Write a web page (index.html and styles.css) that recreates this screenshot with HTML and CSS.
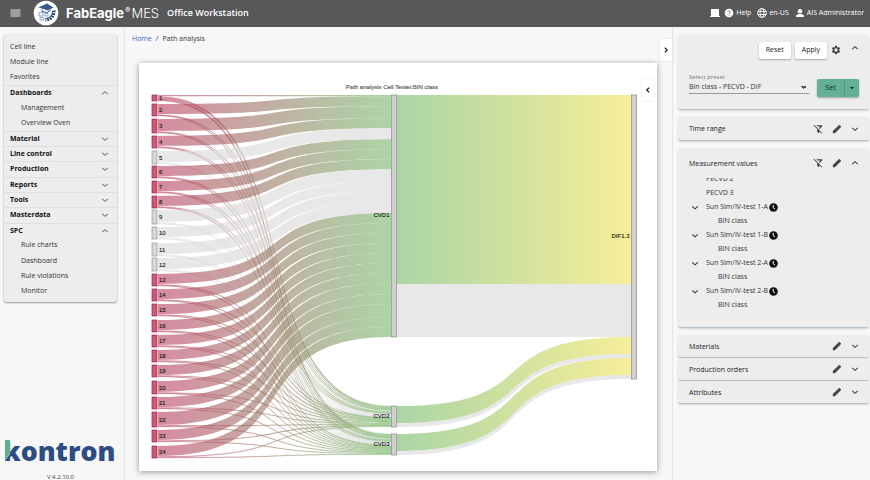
FILE: index.html
```html
<!DOCTYPE html>
<html lang="en">
<head>
    <meta charset="UTF-8">
    <meta name="viewport" content="width=device-width, initial-scale=1.0">
    <title>Path analysis - FabEagle MES</title>
    <link rel="stylesheet" href="styles.css">
</head>
<body>

    <!-- shared icons -->
    <svg class="sprite" aria-hidden="true">
        <symbol id="down" viewBox="0 0 10 10"><path d="M1.5 3.5 5 6.7 8.5 3.5" fill="none" stroke="currentColor" stroke-width="1.3"/></symbol>
        <symbol id="up" viewBox="0 0 10 10"><path d="M1.5 6.5 5 3.3 8.5 6.5" fill="none" stroke="currentColor" stroke-width="1.3"/></symbol>
        <symbol id="left" viewBox="0 0 10 10"><path d="M6.5 2 3.5 5 6.5 8" fill="none" stroke="currentColor" stroke-width="1.6"/></symbol>
        <symbol id="right" viewBox="0 0 10 10"><path d="M3.5 2 6.5 5 3.5 8" fill="none" stroke="currentColor" stroke-width="1.6"/></symbol>
        <symbol id="pencil" viewBox="0 0 24 24"><path fill="currentColor" d="M2 17V22h5L18.300 10.700l-5-5L2 17zM21.200 7.700c.7-.7.7-1.500 0-2.200l-2.700-2.700c-.7-.7-1.500-.7-2.200 0L13.300 5.700l5 5 2.900-3z"/></symbol>
        <symbol id="filter-off" viewBox="0 0 24 24"><path fill="currentColor" d="M8 3h14v3l-6 6.2-2-2L17.500 6H11L8 3zM2.700 2 1.300 3.400 10 12.200V19l5 3v-4.800l5.600 5.500 1.400-1.400L2.700 2z"/></symbol>
        <symbol id="clock" viewBox="0 0 10 10"><circle cx="5" cy="5" r="4.800" fill="#111"/><path d="M4.700 2.200V5.300L6.600 6.600" fill="none" stroke="#fff" stroke-width="1.100"/></symbol>
        <symbol id="gear" viewBox="0 0 24 24"><path fill="currentColor" fill-rule="evenodd" d="M19.400 13a7.500 7.500 0 0 0 0-2l2.100-1.600c.2-.2.3-.4.100-.6l-2-3.500c-.1-.2-.3-.3-.6-.2l-2.500 1a7.300 7.300 0 0 0-1.700-1l-.4-2.600c0-.3-.2-.5-.4-.5h-4c-.3 0-.5.200-.5.500l-.4 2.600c-.6.200-1.200.6-1.700 1l-2.500-1c-.2-.1-.5 0-.6.200l-2 3.500c-.1.200-.1.500.100.6L4.600 11a7.500 7.500 0 0 0 0 2l-2.100 1.600c-.2.200-.3.400-.1.600l2 3.500c.1.200.3.300.6.200l2.500-1c.5.400 1.100.7 1.700 1l.4 2.600c0 .3.200.5.500.5h4c.2 0 .4-.2.400-.5l.4-2.600c.6-.2 1.200-.6 1.700-1l2.500 1c.2.100.5 0 .6-.2l2-3.500c.1-.2.1-.5-.1-.6L19.400 13zM12 16a4 4 0 1 1 0-8 4 4 0 0 1 0 8z"/></symbol>
    </svg>

    <header class="topbar">
        <button class="burger" aria-label="Menu">
            <svg viewBox="0 0 10 8"><path d="M0 1h10M0 3h10M0 5h10M0 7h10" stroke="#e4e4e4" stroke-width="1.200"/></svg>
        </button>
        <svg class="emblem" viewBox="0 0 26 26">
            <circle cx="13" cy="13" r="12.300" fill="#fff"/>
            <path d="M5.500 7.500 14 3.500l6.500 4-5.500 3z" fill="#36588f"/>
            <path d="M9 9.500v2l5 1 4-2.500" fill="none" stroke="#36588f" stroke-width="1"/>
            <path d="M6 12.500h4v3.500H6zM12 13.500h3v2.500h-3zM7 17.500h4v2.500H7z" fill="none" stroke="#7591b8" stroke-width="0.800"/>
            <path d="M21 10.500a8.500 8.500 0 0 1-8.500 9.500" fill="none" stroke="#24406e" stroke-width="3" stroke-dasharray="1.700 1"/>
            <path d="M19.500 11a7 7 0 0 1-7 7.500" fill="none" stroke="#24406e" stroke-width="1"/>
        </svg>
        <div class="brand"><b>FabEagle</b><sup>®</sup><span>MES</span></div>
        <h1 class="app-title">Office Workstation</h1>
        <div class="tools">
            <svg class="laptop" viewBox="0 0 10 9"><path d="M1 .5h8v7H1zM0 7.500h10v1H0z" fill="#fff"/></svg>
            <a href="#help">
                <svg viewBox="0 0 10 10"><circle cx="5" cy="5" r="4.300" fill="#fff"/><path d="M3.700 4a1.300 1.300 0 1 1 2 1.100q-.7.400-.7.900M5 6.800v.9" fill="none" stroke="#58585a" stroke-width=".8"/></svg>
                Help
            </a>
            <a href="#lang">
                <svg viewBox="0 0 10 10" fill="none" stroke="#fff" stroke-width=".9"><circle cx="5" cy="5" r="4.400"/><ellipse cx="5" cy="5" rx="2" ry="4.400"/><path d="M1 3.500h8M1 6.500h8"/></svg>
                en-US
            </a>
            <a href="#user">
                <svg viewBox="0 0 10 10" fill="#fff"><circle cx="5" cy="3.200" r="2.200"/><path d="M1 9V7.800C1 6.500 3.500 5.900 5 5.900s4 .6 4 1.900V9z"/></svg>
                AIS Administrator
            </a>
        </div>
    </header>

    <div class="layout">
        <aside class="sidebar">
            <nav class="menu">
                <a href="#">Cell line</a>
                <a href="#">Module line</a>
                <a href="#">Favorites</a>
                <button>Dashboards<svg><use href="#up"/></svg></button>
                <a class="sub" href="#">Management</a>
                <a class="sub" href="#">Overview Oven</a>
                <button>Material<svg><use href="#down"/></svg></button>
                <button>Line control<svg><use href="#down"/></svg></button>
                <button>Production<svg><use href="#down"/></svg></button>
                <button>Reports<svg><use href="#down"/></svg></button>
                <button>Tools<svg><use href="#down"/></svg></button>
                <button>Masterdata<svg><use href="#down"/></svg></button>
                <button>SPC<svg><use href="#up"/></svg></button>
                <a class="sub" href="#">Rule charts</a>
                <a class="sub" href="#">Dashboard</a>
                <a class="sub" href="#">Rule violations</a>
                <a class="sub" href="#">Monitor</a>
            </nav>
            <div class="vendor">
                <svg viewBox="0 0 114 28" role="img" aria-label="kontron">
                    <text x="-1" y="24" class="vendor-name">kontron</text>
                    <path d="M0 3h6v14L1 24H0z" fill="#f7f7f7"/>
                    <path d="M1 3h5v13L1 24z" fill="#5fb08f"/>
                </svg>
                <span>V 4.2.10.0</span>
            </div>
        </aside>

        <main class="content">
            <div class="content-head">
                <nav class="crumbs"><a href="#">Home</a><span>/</span><span>Path analysis</span></nav>
                <button class="tab" aria-label="Collapse filters"><svg><use href="#right"/></svg></button>
            </div>
            <section class="chart-card">
                <svg id="sankey" viewBox="0 0 518 408"></svg>
                <button class="tab chart-tab" aria-label="Chart options"><svg><use href="#left"/></svg></button>
            </section>
        </main>

        <aside class="filters">
            <section class="panel preset">
                <div class="row actions">
                    <button class="btn">Reset</button>
                    <button class="btn">Apply</button>
                    <button class="icon-btn" aria-label="Settings"><svg><use href="#gear"/></svg></button>
                    <button class="icon-btn chev" aria-label="Collapse"><svg><use href="#up"/></svg></button>
                </div>
                <div class="row choose">
                    <div class="field">
                        <label for="preset">Select preset</label>
                        <select id="preset"><option>Bin class - PECVD - DIF</option></select>
                    </div>
                    <div class="split">
                        <button>Set</button>
                        <button class="caret" aria-label="More"><svg viewBox="0 0 6 4"><path d="M0 0h6L3 3.500z" fill="#123"/></svg></button>
                    </div>
                </div>
            </section>

            <section class="panel row">
                <h2>Time range</h2>
                <button class="icon-btn" aria-label="Clear filter"><svg><use href="#filter-off"/></svg></button>
                <button class="icon-btn" aria-label="Edit"><svg><use href="#pencil"/></svg></button>
                <button class="icon-btn chev" aria-label="Expand"><svg><use href="#down"/></svg></button>
            </section>

            <section class="panel values">
                <div class="row">
                    <h2>Measurement values</h2>
                    <button class="icon-btn" aria-label="Clear filter"><svg><use href="#filter-off"/></svg></button>
                    <button class="icon-btn" aria-label="Edit"><svg><use href="#pencil"/></svg></button>
                    <button class="icon-btn chev" aria-label="Collapse"><svg><use href="#up"/></svg></button>
                </div>
                <div class="scroller">
                    <ul class="tree">
                        <li>PECVD 2</li>
                        <li>PECVD 3</li>
                        <li><svg class="fold"><use href="#down"/></svg>Sun Sim/IV-test 1-A<svg><use href="#clock"/></svg></li>
                        <li class="leaf">BIN class</li>
                        <li><svg class="fold"><use href="#down"/></svg>Sun Sim/IV-test 1-B<svg><use href="#clock"/></svg></li>
                        <li class="leaf">BIN class</li>
                        <li><svg class="fold"><use href="#down"/></svg>Sun Sim/IV-test 2-A<svg><use href="#clock"/></svg></li>
                        <li class="leaf">BIN class</li>
                        <li><svg class="fold"><use href="#down"/></svg>Sun Sim/IV-test 2-B<svg><use href="#clock"/></svg></li>
                        <li class="leaf">BIN class</li>
                    </ul>
                </div>
            </section>

            <div class="stack">
                <section class="panel row">
                    <h2>Materials</h2>
                    <button class="icon-btn" aria-label="Edit"><svg><use href="#pencil"/></svg></button>
                    <button class="icon-btn chev" aria-label="Expand"><svg><use href="#down"/></svg></button>
                </section>
                <section class="panel row">
                    <h2>Production orders</h2>
                    <button class="icon-btn" aria-label="Edit"><svg><use href="#pencil"/></svg></button>
                    <button class="icon-btn chev" aria-label="Expand"><svg><use href="#down"/></svg></button>
                </section>
                <section class="panel row">
                    <h2>Attributes</h2>
                    <button class="icon-btn" aria-label="Edit"><svg><use href="#pencil"/></svg></button>
                    <button class="icon-btn chev" aria-label="Expand"><svg><use href="#down"/></svg></button>
                </section>
            </div>
        </aside>
    </div>

    <script src="sankey.js"></script>
</body>
</html>
```

FILE: styles.css
```css
* {
    box-sizing: border-box;
}

body {
    display: flex;
    flex-direction: column;
    height: 100vh;
    margin: 0;
    overflow: hidden;
    background-color: #f7f7f7;
    color: #333;
    font-family: "Open Sans", "Noto Sans", sans-serif;
    font-size: 7px;
    line-height: 10px;
}

a {
    color: inherit;
    text-decoration: none;
}

button {
    padding: 0;
    border: none;
    background: none;
    color: inherit;
    font: inherit;
    cursor: pointer;
}

svg {
    display: block;
    flex: none;
}

.sprite {
    position: absolute;
    width: 0;
    height: 0;
}

/* top bar */

.topbar {
    display: flex;
    align-items: center;
    flex: none;
    height: 27px;
    padding: 0 6px 2px 10px;
    background-color: #58585a;
    color: #fff;
}

.burger svg {
    width: 11px;
    height: 8px;
}

.emblem {
    width: 26px;
    height: 26px;
    margin-left: 12px;
}

.brand {
    display: flex;
    align-items: center;
    gap: 1px;
    margin-left: 7px;
    font-family: Inter, sans-serif;
    font-size: 13px;
    line-height: 16px;
}

.brand sup {
    align-self: flex-start;
    font-size: 8px;
    font-weight: bold;
    line-height: 10px;
}

.brand span {
    font-weight: 300;
}

.app-title {
    margin: 0 0 0 8px;
    font-size: 9px;
    font-weight: 600;
}

.tools {
    display: flex;
    align-items: center;
    gap: 6px;
    margin-left: auto;
}

.tools a {
    display: flex;
    align-items: center;
    gap: 2px;
}

.tools svg {
    width: 10px;
    height: 10px;
}

.laptop {
    margin-right: -2px;
}

/* page columns */

.layout {
    display: grid;
    grid-template-columns: 125px 1fr 198px;
    flex: 1;
    min-height: 0;
}

.sidebar {
    display: flex;
    flex-direction: column;
    justify-content: space-between;
    padding: 7px 7px 0 4px;
    border-right: 1px solid #e4e4e4;
}

.menu {
    display: grid;
    grid-auto-rows: 1fr;
    min-height: 268px;
    padding: 5px 0 3px;
    border-radius: 3px;
    background-color: #ededed;
    box-shadow: 0 1px 2px rgba(0, 0, 0, 0.4);
}

.menu a,
.menu button {
    display: flex;
    align-items: center;
    justify-content: space-between;
    padding: 0 8px 0 6px;
}

.menu button {
    border-top: 1px solid #e0e0e0;
    color: #111;
    font-weight: bold;
}

.menu .sub {
    padding-left: 17px;
}

.menu svg {
    width: 8px;
    height: 8px;
    color: #777;
}

.vendor {
    text-align: center;
    font-size: 6px;
}

.vendor svg {
    width: 100%;
}

.vendor-name {
    fill: #2c4c84;
    font-size: 27px;
    font-weight: 800;
}

.vendor span {
    display: block;
    margin-top: 9px;
    line-height: 6px;
}

/* middle */

.content {
    padding: 7px 0 0 7px;
}

.content-head {
    display: flex;
    justify-content: space-between;
}

.crumbs {
    display: flex;
    gap: 4px;
    line-height: 9px;
}

.crumbs a {
    color: #3f67d0;
}

.tab {
    display: flex;
    align-items: center;
    justify-content: center;
    width: 12px;
    height: 22px;
    background-color: #fff;
    box-shadow: 0 0 2px rgba(0, 0, 0, 0.15);
    color: #222;
}

.content-head .tab {
    margin-top: 5px;
}

.tab svg {
    width: 8px;
    height: 8px;
}

.chart-card {
    position: relative;
    margin: 2px 15px 0 7px;
    background-color: #fff;
    box-shadow: 0 1px 6px rgba(0, 0, 0, 0.4);
}

.chart-tab {
    position: absolute;
    top: 16px;
    right: 3px;
}

#sankey {
    width: 100%;
    font-family: "Liberation Sans", Arial, sans-serif;
    font-size: 6px;
    fill: #111;
}

#sankey .title {
    fill: #666;
    stroke: #666;
    stroke-width: 0.2px;
}

#sankey .label {
    stroke: #111;
    stroke-width: 0.1px;
}

/* filters */

.filters {
    display: flex;
    flex-direction: column;
    gap: 7px;
    padding: 8px 1px 0 5px;
    border-left: 1px solid #e2e5e8;
}

.panel {
    padding: 0 10px 0 11px;
    border-bottom: 1px solid #b4c2cf;
    border-radius: 3px;
    background-color: #ededed;
    box-shadow: 0 1px 2px rgba(0, 0, 0, 0.15);
}

.row {
    display: flex;
    align-items: center;
    gap: 9px;
    min-height: 24px;
}

.row h2 {
    flex: 1;
    margin: 0;
    padding-top: 1px;
    font-size: 7px;
    font-weight: normal;
    color: #222;
}

.icon-btn svg {
    width: 10px;
    height: 10px;
    color: #444;
}

.icon-btn.chev svg {
    width: 8px;
    height: 8px;
}

.preset {
    height: 75px;
}

.actions {
    gap: 4px;
    height: 30px;
    justify-content: flex-end;
}

.actions .chev {
    margin: 0 0 4px 6px;
}

.btn {
    height: 17px;
    padding: 0 7px;
    border-radius: 2px;
    background-color: #fff;
    box-shadow: 0 1px 2px rgba(0, 0, 0, 0.3);
    color: #222;
}

.choose {
    align-items: flex-end;
    height: 32px;
    gap: 8px;
}

.field {
    flex: 1;
    margin-bottom: 3px;
}

.field label {
    display: block;
    color: #777;
    font-size: 6px;
    line-height: 8px;
}

.field select {
    display: block;
    width: 100%;
    height: 13px;
    padding: 0;
    border: none;
    border-bottom: 1px solid #999;
    border-radius: 0;
    appearance: none;
    /* arrow built from two triangles */
    background: linear-gradient(45deg, transparent 50%, #555 50%) right 5px top 5px / 3px 3px no-repeat,
        linear-gradient(-45deg, transparent 50%, #555 50%) right 2px top 5px / 3px 3px no-repeat;
    color: #333;
    font: inherit;
}

.split {
    display: flex;
    height: 18px;
    border-radius: 2px;
    background-color: #63b095;
    box-shadow: 0 1px 2px rgba(0, 0, 0, 0.3);
    color: #123;
}

.split button {
    width: 27px;
}

.split .caret {
    display: flex;
    align-items: center;
    justify-content: center;
    width: 15px;
    border-left: 1px solid #4f9a80;
}

.caret svg {
    width: 4px;
}

.values {
    height: 180px;
}

.values .row {
    height: 30px;
}

.scroller {
    overflow: hidden;
}

.tree {
    margin: -6px 0 0;
    padding: 0;
    list-style: none;
}

.tree li {
    position: relative;
    display: flex;
    align-items: center;
    gap: 1px;
    height: 14px;
    padding-left: 17px;
}

.tree .leaf {
    padding-left: 29px;
}

.tree svg {
    width: 9px;
    height: 9px;
}

.tree .fold {
    position: absolute;
    left: 2px;
    width: 8px;
}

.stack {
    display: grid;
}

.stack .row {
    min-height: 23px;
}
```

FILE: sankey.js
```js
const NS = "http://www.w3.org/2000/svg";
const svg = document.getElementById("sankey");

const RED = "#bb3e61";
const GREEN = "#73b969";
const YELLOW = "#f0e353";
const GREY = "#d9d9d9";

// top and height of the 24 cells in the first column
const cells = [
    [32, 6], [41, 12], [56, 14], [73, 12], [88, 13], [103, 12], [118, 12], [133, 12],
    [147, 14], [164, 12], [180, 13], [195, 13], [211, 12], [226, 12], [241, 12], [257, 12],
    [272, 12], [287, 12], [302, 12], [318, 13], [334, 12], [349, 15], [367, 12], [383, 12]
];
const missing = [5, 9, 10, 11, 12];

function add(name, attrs, text) {
    const el = document.createElementNS(NS, name);
    for (const key in attrs) {
        el.setAttribute(key, attrs[key]);
    }
    if (text) {
        el.textContent = text;
    }
    svg.appendChild(el);
    return el;
}

function gradient(id, x1, x2, from, to) {
    const g = add("linearGradient", { id: id, gradientUnits: "userSpaceOnUse", x1: x1, x2: x2, y1: 0, y2: 0 });
    g.innerHTML = `<stop offset="0" stop-color="${from}"/><stop offset="1" stop-color="${to}"/>`;
}

function link(x0, y0, x1, y1, h, fill, thin) {
    const c = (x1 - x0) * 0.66;
    const d = `M${x0} ${y0}C${x0 + c} ${y0} ${x1 - c} ${y1} ${x1} ${y1}V${y1 + h}` +
        `C${x1 - c} ${y1 + h} ${x0 + c} ${y0 + h} ${x0} ${y0 + h}Z`;
    const attrs = { d: d, fill: fill, "fill-opacity": 0.6 };
    if (thin) {
        attrs.stroke = fill;
        attrs["stroke-width"] = 0.2;
        attrs["stroke-opacity"] = 0.6;
    }
    add("path", attrs);
}

function node(x, y, h, fill, stroke) {
    add("rect", { x: x, y: y, width: 5, height: h, fill: fill, stroke: stroke, "stroke-width": 0.7 });
}

gradient("first", 19, 252, RED, GREEN);
gradient("second", 258, 492, GREEN, YELLOW);

// first column to CVD1, CVD2 and CVD3
const sum = cells.slice(1).reduce((s, c) => s + c[1] - 1.6, 0);
let a = 32, b = 343, c = 371;
cells.forEach(([y, h], i) => {
    const side = i === 0 ? 2.3 : 0.8;
    const main = i === 0 ? 1.3 : (h - 1.6) * 240.7 / sum;
    const fill = missing.includes(i + 1) ? GREY : "url(#first)";
    link(19, y, 252, a, main, fill);
    link(19, y + h - side * 2, 252, b, side, fill, true);
    link(19, y + h - side, 252, c, side, fill, true);
    a += main;
    b += side;
    c += side;
});

// CVD nodes to DIF1.3
link(258, 32, 492, 32, 189, "url(#second)");
link(258, 221, 492, 221, 53, GREY);
link(258, 343, 492, 274, 17, "url(#second)");
link(258, 360, 492, 291, 4, GREY);
link(258, 371, 492, 295, 17, "url(#second)");
link(258, 388, 492, 312, 4, GREY);

cells.forEach(([y, h], i) => {
    const off = missing.includes(i + 1);
    node(13, y, h, off ? "#d5d8d8" : "#d0567c", off ? "#999" : "#96304e");
    add("text", { class: "label", x: 20, y: y + h / 2 + 2 }, String(i + 1));
});

[[252.5, 32, 242, "CVD1"], [252.5, 343, 21, "CVD2"], [252.5, 371, 21, "CVD3"], [492.5, 32, 284, "DIF1.3"]].forEach(([x, y, h, name]) => {
    node(x, y, h, "#d0d0d0", "#888");
    add("text", { class: "label", x: x - 2, y: y + h / 2 + 1, "text-anchor": "end" }, name);
});

add("text", { class: "title", x: 253, y: 26, "text-anchor": "middle" }, "Path analysis Cell Tester.BIN class");
```
